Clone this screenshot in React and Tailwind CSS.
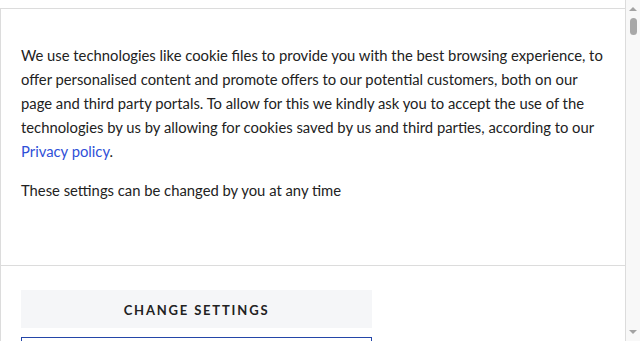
import React from 'react';

function Scrollbar() {
  return (
    <div className="flex w-[15px] shrink-0 flex-col items-center border-l border-[#dcdcdc] bg-[#f8f8f8]">
      <div className="mt-[7px] h-0 w-0 border-x-[4px] border-b-[4px] border-x-transparent border-b-[#a3a3a3]" />
      <div className="mt-[7px] h-[17px] w-[7px] rounded-full bg-[#a8a8a8]" />
      <div className="flex-1" />
      <div className="mb-[7px] h-0 w-0 border-x-[4px] border-t-[4px] border-x-transparent border-t-[#a3a3a3]" />
    </div>
  );
}

export default function App() {
  return (
    <div
      className="flex h-[341px] w-[640px] overflow-hidden bg-white text-[#222]"
      style={{ fontFamily: 'Lato, "Open Sans", sans-serif' }}
    >
      <div className="flex flex-1 flex-col">
        <div className="h-[9px] shrink-0 border-b border-[#dcdcdc]" />
        <div className="flex h-[257px] shrink-0 flex-col gap-[15px] border-b border-l border-[#dcdcdc] pl-[20px] pr-[18px] pt-[34px]">
          <p className="text-[14.8px] leading-[24px]">
            We use technologies like cookie files to provide you with the best browsing experience, to offer
            personalised content and promote offers to our potential customers, both on our page and third party
            portals. To allow for this we kindly ask you to accept the use of the technologies by us by allowing for
            cookies saved by us and third parties, according to our{' '}
            <a href="#" className="text-[#2f50d8]">Privacy policy</a>.
          </p>
          <p className="text-[14.8px] leading-[24px]">These settings can be changed by you at any time</p>
        </div>
        <div className="flex flex-1 flex-col gap-[9px] border-l border-[#dcdcdc] pl-[20px] pt-[24px]">
          <button className="h-[38px] w-[351px] bg-[#f5f6f8] pt-[3px] text-[13px] font-bold uppercase tracking-[0.14em] text-[#222]">
            Change settings
          </button>
          <button className="h-[38px] w-[351px] border border-[#2446a8] bg-white text-[13px] font-bold uppercase tracking-[0.14em] text-[#2446a8]">
            Accept all
          </button>
        </div>
      </div>
      <Scrollbar />
    </div>
  );
}
